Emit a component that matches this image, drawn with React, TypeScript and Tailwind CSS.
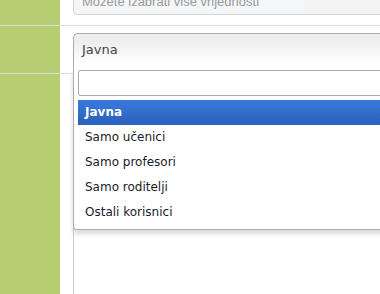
import React from "react";

const options = ["Javna", "Samo učenici", "Samo profesori", "Samo roditelji", "Ostali korisnici"];

export default function App() {
  return (
    <div className="w-[380px] h-[294px] overflow-hidden bg-white flex flex-col font-['DejaVu_Sans',sans-serif]">
      {/* red 1: polje za višestruki izbor */}
      <div className="h-[26px] shrink-0 flex border-b border-[#dddddd]">
        <div className="w-[60px] shrink-0 bg-[#b6cd71]" />
        <div className="flex items-end pb-[10px] pl-[13px]">
          <div className="w-[320px] h-[30px] shrink-0 flex border border-[#d4d4d4] rounded-[4px] bg-[#f3f3f3]">
            <div className="w-[230px] flex items-end pl-[8px] pb-[5px] bg-[#f5f6f8] rounded-bl-[4px] text-[13px] leading-[15px] text-[#999999] font-['Liberation_Sans',sans-serif] whitespace-nowrap">
              Možete izabrati više vrijednosti
            </div>
          </div>
        </div>
      </div>

      {/* red 2: padajući izbor */}
      <div className="h-[48px] shrink-0 flex border-b border-[#dddddd]">
        <div className="w-[60px] shrink-0 bg-[#b6cd71]" />
        <div className="pt-[7px] pl-[13px]">
          <div className="relative w-[320px] z-10">
            <div className="h-[37px] pt-[8px] pl-[8px] border-t border-l border-[#aaaaaa] rounded-tl-[5px] bg-linear-to-b from-[#eeeeee] from-20% to-white to-80% text-[13px] leading-[15px] text-[#444444]">
              Javna
            </div>
            <div className="absolute top-[37px] left-0 w-full bg-white border-l border-b border-[#aaaaaa] rounded-bl-[4px] shadow-[0_4px_5px_rgba(0,0,0,0.15)]">
              <div className="pl-[4px]">
                <div className="h-[26px] border border-[#aaaaaa] rounded-[2px] bg-white" />
              </div>
              <ul className="mt-[4px] mb-[4px] pl-[4px] text-[12px] leading-[15px] text-[#1a1a2a]">
                {options.map((o, i) => (
                  <li
                    key={o}
                    className={
                      i === 0
                        ? "h-[25px] px-[7px] py-[5px] font-bold text-white bg-linear-to-b from-[#3875d7] from-20% to-[#2a62bc] to-90%"
                        : "h-[25px] px-[7px] py-[5px]"
                    }
                  >
                    {o}
                  </li>
                ))}
              </ul>
            </div>
          </div>
        </div>
      </div>

      {/* red 3 */}
      <div className="flex-1 flex">
        <div className="w-[60px] shrink-0 bg-[#b6cd71]" />
        <div className="pl-[13px]">
          <div className="h-full border-l border-[#cccccc]" />
        </div>
      </div>
    </div>
  );
}
